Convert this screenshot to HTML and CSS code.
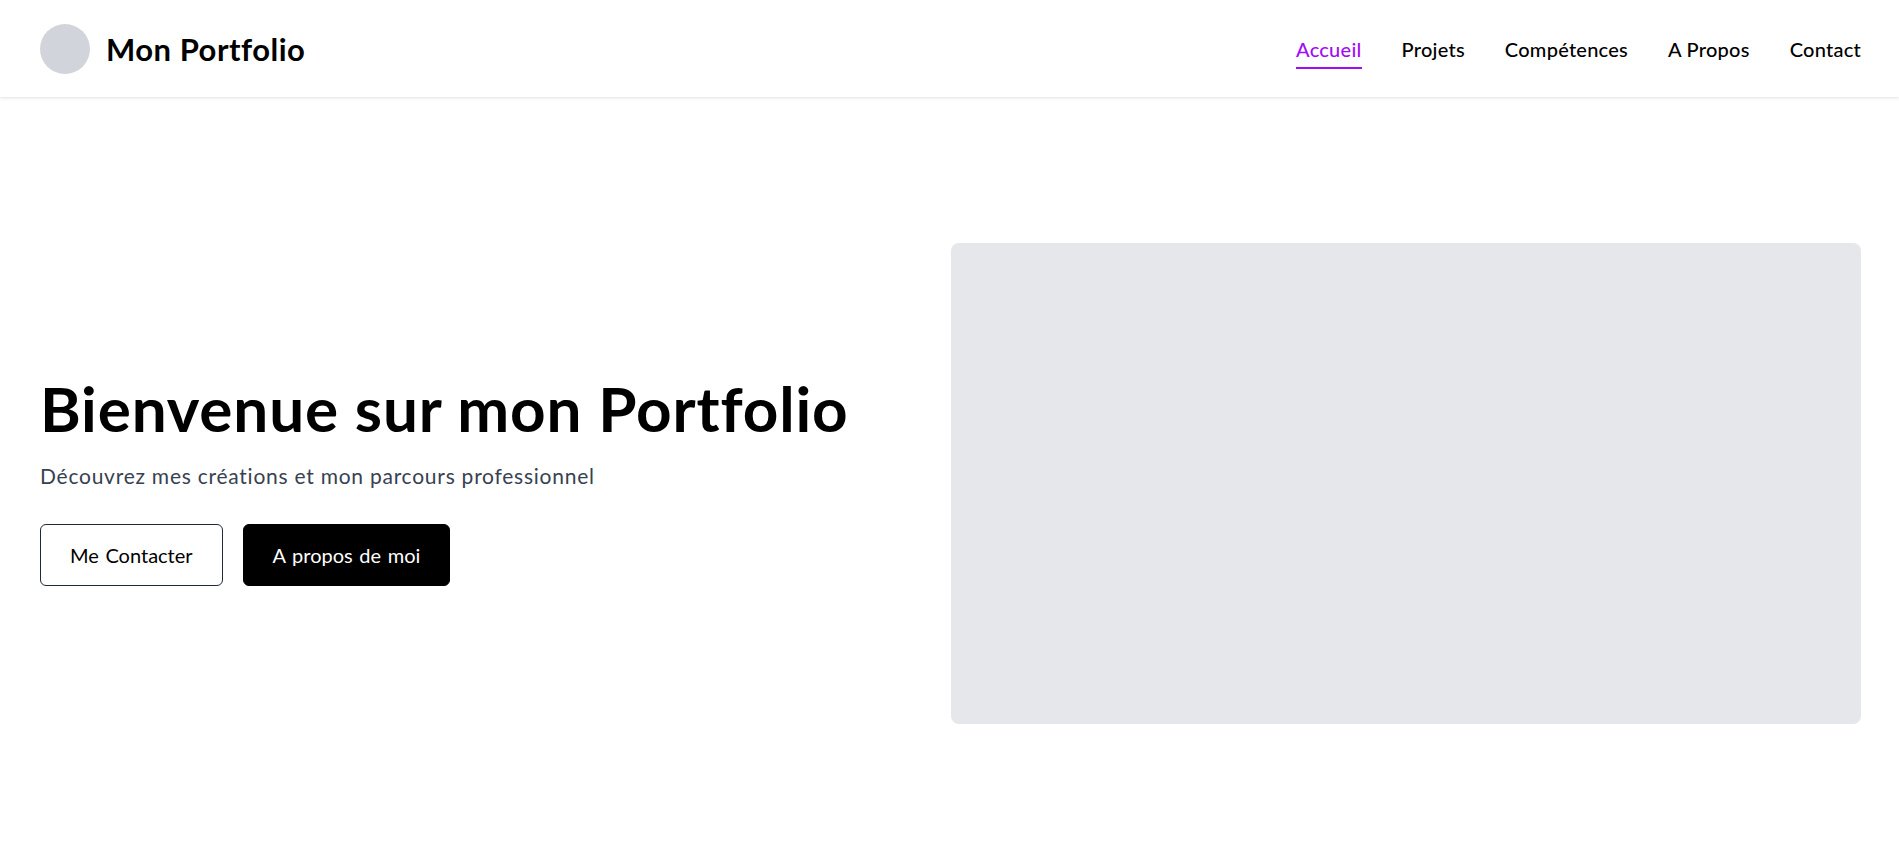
FILE: index.html
```html
<!DOCTYPE html>
<html lang="fr">
<head>
<meta charset="utf-8">
<title>Mon Portfolio</title>
<link rel="stylesheet" href="styles.css">
</head>
<body>
<header class="site-header">
  <div class="brand">
    <span class="avatar"></span>
    <span class="brand-name">Mon Portfolio</span>
  </div>
  <nav class="nav">
    <a class="nav-link active" href="#">Accueil</a>
    <a class="nav-link" href="#">Projets</a>
    <a class="nav-link" href="#">Compétences</a>
    <a class="nav-link" href="#">A Propos</a>
    <a class="nav-link" href="#">Contact</a>
  </nav>
</header>
<main class="hero">
  <div class="hero-text">
    <h1 class="hero-title">Bienvenue sur mon Portfolio</h1>
    <p class="hero-subtitle">Découvrez mes créations et mon parcours professionnel</p>
    <div class="hero-actions">
      <a class="btn btn-outline" href="#">Me Contacter</a>
      <a class="btn btn-solid" href="#">A propos de moi</a>
    </div>
  </div>
  <div class="hero-media">
    <div class="media-placeholder"></div>
  </div>
</main>
</body>
</html>
```
FILE: styles.css
```css
* { box-sizing: border-box; }
html, body { margin: 0; padding: 0; }
body {
  font-family: "Lato", "Open Sans", sans-serif;
  color: #000;
  background: #fff;
}
a { text-decoration: none; color: inherit; }

.site-header {
  display: flex;
  align-items: center;
  justify-content: space-between;
  padding: 24px 38px 24px 40px;
  height: 97px;
  box-shadow: 0 1px 3px rgba(0,0,0,0.12);
  position: relative;
  z-index: 1;
}
.brand { display: flex; align-items: center; gap: 16px; }
.avatar {
  width: 50px; height: 50px; border-radius: 50%;
  background: #d1d5db;
  display: block;
}
.brand-name { font-size: 31px; font-weight: 700; line-height: 36px; letter-spacing: 0.5px; }

.nav { display: flex; align-items: center; gap: 40px; }
.nav-link {
  position: relative;
  font-size: 20px; font-weight: 500; line-height: 28px;
  letter-spacing: 0.25px;
  color: #000;
}
.nav-link.active { color: #a10cf5; }
.nav-link.active::after {
  content: "";
  position: absolute;
  left: 0; right: 0; bottom: -6px;
  height: 2px;
  background: #a10cf5;
}

.hero {
  display: grid;
  grid-template-columns: 1fr 1fr;
  align-items: center;
  min-height: 767px;
  padding: 2px 38px 0 40px;
}
.hero-title {
  margin: 0;
  font-size: 62px; line-height: 60px; font-weight: 700;
  letter-spacing: 0.85px;
}
.hero-subtitle {
  margin: 24px 0 0;
  font-size: 21px; line-height: 28px;
  letter-spacing: 0.75px;
  color: #374151;
}
.hero-actions { display: flex; gap: 20px; margin-top: 34px; }
.btn {
  display: inline-flex; align-items: center; justify-content: center;
  height: 62px;
  padding: 0 29px;
  border-radius: 6px;
  font-size: 20px;
  word-spacing: 1.5px;
  border: 1px solid #1f2937;
}
.btn-outline { background: #fff; color: #000; }
.btn-solid { background: #000; color: #fff; border-color: #000; }

.hero-media { padding-top: 3px; }
.media-placeholder {
  height: 481px;
  background: #e5e7eb;
  border-radius: 8px;
}
```
